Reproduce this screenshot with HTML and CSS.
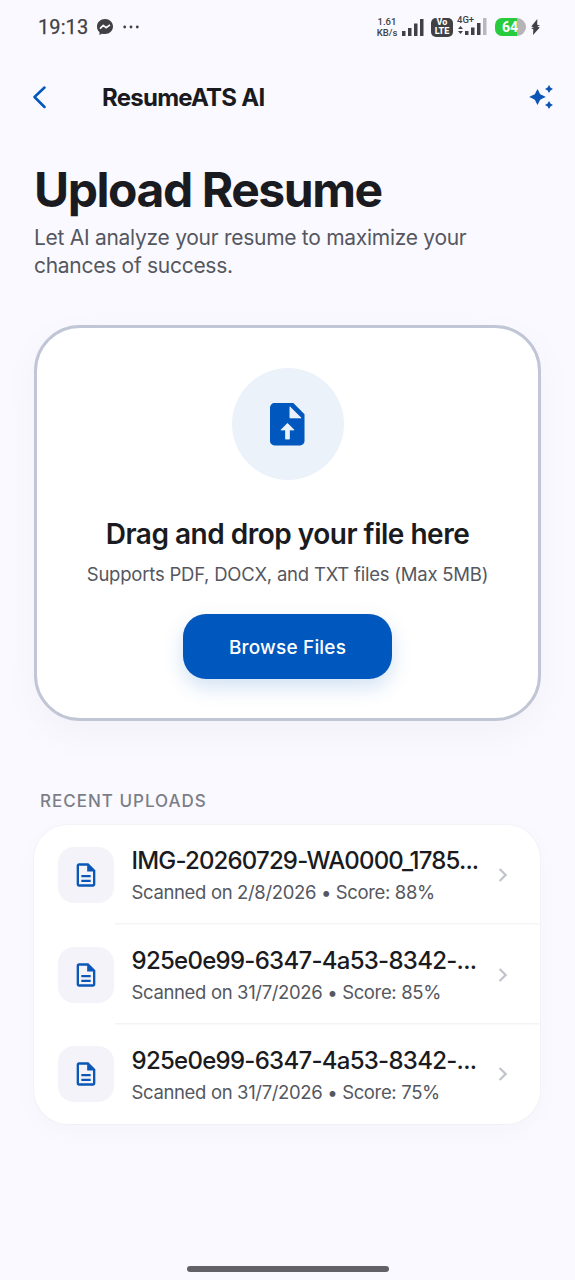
FILE: index.html
```html
<!DOCTYPE html>
<html lang="en">
<head>
<meta charset="utf-8">
<title>ResumeATS AI</title>
<link rel="stylesheet" href="styles.css">
</head>
<body>
<svg class="defs" aria-hidden="true">
  <symbol id="doc" viewBox="0 0 24 24"><path fill-rule="evenodd" d="M8 16h8v2H8zm0-4h8v2H8zm6-10H6c-1.100 0-2 .9-2 2v16c0 1.100.89 2 1.990 2H18c1.100 0 2-.9 2-2V8l-6-6zm4 18H6V4h7v5h5v11z"/></symbol>
  <symbol id="chevron" viewBox="0 0 24 24"><path d="M8.600 6 14.600 12 8.600 18" fill="none" stroke="currentColor" stroke-width="2.300"/></symbol>
</svg>
<div class="screen">
  <div class="status">
    <span class="clock">19:13</span>
    <svg class="messenger" viewBox="0 0 16 16"><path fill="#414145" d="M8 0C3.500 0 0 3.300 0 7.600c0 2.300.9 4.200 2.500 5.600V16l2.400-1.300c1 .3 2 .4 3.100.4 4.500 0 8-3.200 8-7.500S12.500 0 8 0z"/><path fill="none" stroke="#f9f8ff" stroke-width="1.700" stroke-linejoin="round" d="M3 9.700 6.300 6.300 9 8.700 13 5.900"/></svg>
    <svg class="dots" viewBox="0 0 16 4"><circle cx="1.700" cy="2" r="1.400"/><circle cx="8" cy="2" r="1.400"/><circle cx="14.300" cy="2" r="1.400"/></svg>
    <span class="speed"><span>1.61</span><span>KB/s</span></span>
    <svg class="bars" viewBox="0 0 22 17"><path d="M0 12h3.500v5H0zM6 9h3.500v8H6zM12 4.500h3.500V17H12zM18 0h3.500v17H18z"/></svg>
    <span class="volte"><span>Vo</span><span>LTE</span></span>
    <span class="mobile">
      <span class="net">4G+</span>
      <svg class="bars2" viewBox="0 0 29 17"><path d="M0 11 2.500 8 5 11zM0 13h5L2.500 16zM7 13h3.500v4H7zM13 9.500h3.500V17H13zM19 5h3.500v12H19z"/><path fill="#b9b9bd" d="M25 0h3.500v17H25z"/></svg>
    </span>
    <span class="battery">64</span>
    <svg class="bolt" viewBox="0 0 9 16"><path fill="#414145" d="M6.300 0 .2 7.500 3 8.300 0 9.300 2.300 10.200 2 16 8.800 8.600 6.200 7.800 9 6.600 6.200 5.800z"/></svg>
  </div>

  <header class="topbar">
    <svg class="back" viewBox="0 0 14 24"><path d="M12.500 2.500 2.500 12 12.500 22" fill="none" stroke="#0057bd" stroke-width="2.500" stroke-linecap="round" stroke-linejoin="round"/></svg>
    <span class="brand">ResumeATS AI</span>
    <svg class="sparkle" viewBox="0 0 24 24"><path fill="#0b55b7" d="M8.500 4Q9.700 6 10.900 8.700L11.600 9.600Q13.800 10.500 16.800 12Q13.800 13.500 11.600 14.400L10.900 15.300Q10 17.300 8.500 20Q7 17.300 6.100 15.300L5.400 14.400Q3.200 13.500.2 12Q3.200 10.500 5.400 9.600L6.100 8.700Q7 6.800 8.500 4zM20 0l1.400 2.600 2.600 1.400-2.600 1.400L20 8l-1.400-2.600L16 4l2.600-1.400zM20 16l1.400 2.600 2.600 1.400-2.600 1.400-1.400 2.600-1.400-2.600-2.600-1.400 2.600-1.400z"/></svg>
  </header>

  <main class="content">
    <h1 class="title">Upload Resume</h1>
    <p class="subtitle">Let AI analyze your resume to maximize your<br>chances of success.</p>

    <section class="drop">
      <div class="drop-icon">
        <svg class="upload" viewBox="0 0 36 44"><path fill="#0057bd" d="M4.500 0H24L35.500 11.500V39a4.500 4.500 0 0 1-4.500 4.500H4.500A4.500 4.500 0 0 1 0 39V4.500A4.500 4.500 0 0 1 4.500 0z"/><path fill="#ebf2fa" stroke="#ebf2fa" stroke-width=".8" stroke-linejoin="round" d="M20.500 3.800V15.200H32zM18 20.800l6.800 6.800H20V37h-4v-9.400h-4.800z"/></svg>
      </div>
      <h2 class="drop-title">Drag and drop your file here</h2>
      <p class="drop-note">Supports PDF, DOCX, and TXT files (Max 5MB)</p>
      <button class="browse">Browse Files</button>
    </section>

    <h3 class="label">RECENT UPLOADS</h3>
    <section class="list">
      <article class="item">
        <span class="tile"><svg><use href="#doc"/></svg></span>
        <div class="info"><span class="name">IMG-20260729-WA0000_1785...</span><span class="meta">Scanned on 2/8/2026 • Score: 88%</span></div>
        <svg class="chev"><use href="#chevron"/></svg>
      </article>
      <article class="item">
        <span class="tile"><svg><use href="#doc"/></svg></span>
        <div class="info"><span class="name hash">925e0e99-6347-4a53-8342-...</span><span class="meta">Scanned on 31/7/2026 • Score: 85%</span></div>
        <svg class="chev"><use href="#chevron"/></svg>
      </article>
      <article class="item">
        <span class="tile"><svg><use href="#doc"/></svg></span>
        <div class="info"><span class="name hash">925e0e99-6347-4a53-8342-...</span><span class="meta">Scanned on 31/7/2026 • Score: 75%</span></div>
        <svg class="chev"><use href="#chevron"/></svg>
      </article>
    </section>
  </main>
  <div class="home"></div>
</div>
</body>
</html>
```
FILE: styles.css
```css
* { box-sizing: border-box; }
body { margin: 0; background: #faf9ff; font-family: Inter, sans-serif; color: #1a1b20; }
h1, h2, h3, p { margin: 0; }
svg { display: block; flex: none; }
.defs { display: none; }
.screen { width: 575px; height: 1280px; display: flex; flex-direction: column; overflow: hidden; }

.status { height: 54px; padding: 0 35px 0 38px; display: flex; align-items: center; color: #414145; font-family: Roboto, sans-serif; fill: #414145; }
.clock { font-size: 20px; letter-spacing: .1px; width: 59px; font-weight: 400; -webkit-text-stroke: .25px #414145; line-height: 24px; white-space: nowrap; }
.messenger { width: 16px; height: 16px; }
.dots { width: 16px; height: 4px; margin-left: 10px; margin-right: auto; }
.speed { display: flex; flex-direction: column; align-items: center; font-size: 9.500px; line-height: 11px; font-weight: 500; width: 20px; white-space: nowrap; }
.bars { width: 22px; height: 17px; margin-left: 5px; }
.volte { width: 22px; height: 19px; margin-left: 7px; border-radius: 5px; background: #414145; color: #fff; font-size: 9px; line-height: 9px; font-weight: 800; display: flex; flex-direction: column; align-items: center; justify-content: center; }
.mobile { width: 31px; margin-left: 4px; height: 22px; display: grid; }
.net { grid-area: 1 / 1; font-size: 9.500px; line-height: 9px; font-weight: 500; margin-top: -1px; }
.bars2 { grid-area: 1 / 1; width: 29px; height: 17px; align-self: end; margin: 0 0 3px 1px; }
.battery { width: 31px; height: 18px; margin-left: 7px; border-radius: 7px 9px 9px 7px; background: linear-gradient(90deg, #27cb3b 0 22px, #b5b5b8 22px); color: #fff; font-size: 14px; line-height: 18px; font-weight: 700; text-align: center; padding-right: 1px; }
.bolt { width: 9px; height: 16px; margin-left: 5px; }

.topbar { height: 86px; padding: 0 22px 0 32px; display: flex; align-items: center; }
.back { width: 14px; height: 24px; }
.brand { margin-left: 56px; font-size: 24px; font-weight: 700; letter-spacing: -.75px; }
.sparkle { width: 24px; height: 24px; margin-left: auto; }

.content { padding: 22px 34px 0; flex: 1; }
.title { font-size: 48px; line-height: 56px; font-weight: 700; letter-spacing: -1.450px; }
.subtitle { margin-top: 6px; font-size: 21px; line-height: 28px; letter-spacing: -.28px; color: #55575f; white-space: nowrap; }

.drop { margin-top: 45px; height: 396px; border: 3px solid #c1c6d6; border-radius: 46px; background: #fff; box-shadow: 0 12px 42px rgba(25, 25, 60, .035); display: flex; flex-direction: column; align-items: center; padding-top: 40px; }
.drop-icon { width: 112px; height: 112px; border-radius: 50%; background: #ebf2fa; display: grid; place-items: center; }
.upload { width: 35px; height: 43px; }
.drop-title { margin-top: 36px; font-size: 28px; line-height: 36px; font-weight: 600; letter-spacing: -.5px; white-space: nowrap; }
.drop-note { margin-top: 9px; font-size: 18.500px; line-height: 26px; letter-spacing: -.22px; color: #55575f; white-space: nowrap; }
.browse { margin-top: 27px; width: 209px; height: 65px; border: 0; border-radius: 23px; background: #0057bd; color: #fff; font: 500 19px/24px Inter, sans-serif; letter-spacing: .18px; padding-top: 3px; box-shadow: 0 8px 20px rgba(0, 87, 189, .18); }

.label { margin: 68px 0 12px 6px; font-size: 17px; line-height: 24px; font-weight: 500; letter-spacing: 1px; color: #7b7e88; }
.list { width: 506px; border-radius: 34px; background: #fff; box-shadow: 0 8px 28px rgba(25, 25, 60, .025), 0 0 0 1px rgba(240, 240, 245, .6); }
.item { height: 99.800px; padding: 0 25px 0 24px; display: flex; align-items: center; background: linear-gradient(#f4f4f6, #f4f4f6) 81px 100% / 425px 1.500px no-repeat; }
.item:last-child { background: none; }
.tile { width: 56px; height: 56px; border-radius: 16px; background: #f3f3f9; display: grid; place-items: center; }
.tile svg { width: 28px; height: 28px; fill: #0b57b7; }
.info { margin-left: 17.500px; padding-top: 1px; display: flex; flex-direction: column; white-space: nowrap; }
.name { font-size: 24px; line-height: 32px; font-weight: 500; letter-spacing: -.83px; }
.hash { letter-spacing: -.73px; }
.meta { font-size: 18.500px; line-height: 26px; margin-top: 2px; letter-spacing: -.35px; color: #55575f; }
.chev { width: 24px; height: 24px; margin-left: auto; color: #c1c3cd; }
.home { width: 202px; height: 6px; border-radius: 3px; background: #626167; margin: 0 auto 8px; }
```
